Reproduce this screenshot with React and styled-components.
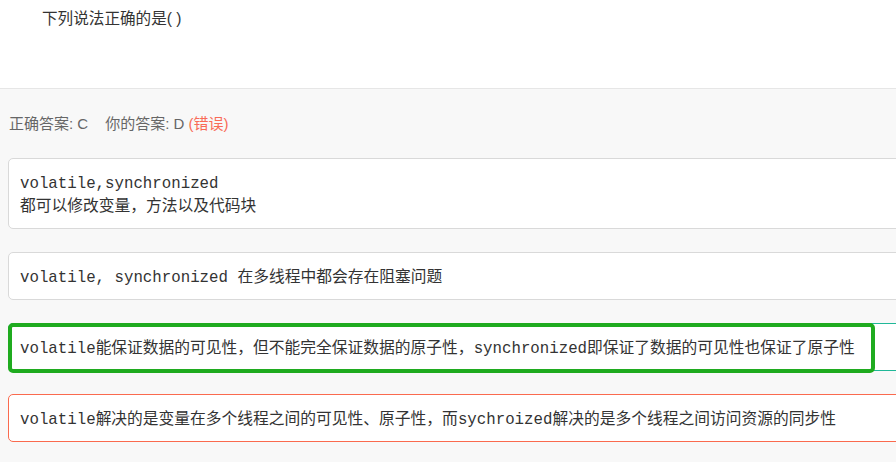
import React from 'react';
import styled, { createGlobalStyle } from 'styled-components';

const GlobalStyle = createGlobalStyle`
  html, body {
    margin: 0;
    padding: 0;
    background: #f8f8f8;
    overflow: hidden;
  }
  body {
    font-family: "Liberation Sans", "Noto Sans CJK SC", sans-serif;
    color: #333;
  }
`;

const Page = styled.div`
  width: 896px;
  height: 462px;
  overflow: hidden;
`;

const QuestionArea = styled.div`
  height: 89px;
  box-sizing: border-box;
  padding: 7px 0 0 42px;
  background: #fff;
  border-bottom: 1px solid #e6e6e6;
  font-size: 15.6px;
  line-height: 24px;
`;

const AnswerArea = styled.div`
  padding: 23px 0 0 8px;
`;

const AnswerLine = styled.div`
  padding-left: 1px;
  font-size: 15px;
  line-height: 24px;
  color: #666;
  margin-bottom: 22px;
`;

const Gap = styled.span`
  display: inline-block;
  width: 17px;
`;

const Wrong = styled.span`
  color: #f96b57;
`;

const OptionList = styled.div`
  display: flex;
  flex-direction: column;
  gap: 23px;
`;

const borderColors = {
  normal: '#d9d9d9',
  correct: '#20b898',
  wrong: '#fa6a4e',
};

const Option = styled.div`
  position: relative;
  width: 1000px;
  box-sizing: border-box;
  padding: 12px 11px 11px;
  background: #fff;
  border: 1px solid ${p => borderColors[p.$state]};
  border-radius: 5px;
  font-size: 15.75px;
  line-height: 23px;
  color: #333;
`;

const Code = styled.span`
  font-family: "Liberation Mono", monospace;
  font-size: 15.75px;
  line-height: 1;
`;

const Highlight = styled.div`
  position: absolute;
  left: -1px;
  top: -1px;
  width: 867px;
  height: 50px;
  box-sizing: border-box;
  border: 4px solid #1fab1f;
  border-radius: 5px;
  pointer-events: none;
`;

const App = () => (
  <>
    <GlobalStyle />
    <Page>
      <QuestionArea>下列说法正确的是( )</QuestionArea>
      <AnswerArea>
        <AnswerLine>
          正确答案: C<Gap />你的答案: D <Wrong>(错误)</Wrong>
        </AnswerLine>
        <OptionList>
          <Option $state="normal">
            <Code>volatile,synchronized</Code>
            <br />
            都可以修改变量，方法以及代码块
          </Option>
          <Option $state="normal">
            <Code>volatile, synchronized </Code>在多线程中都会存在阻塞问题
          </Option>
          <Option $state="correct">
            <Code>volatile</Code>能保证数据的可见性，但不能完全保证数据的原子性，<Code>synchronized</Code>即保证了数据的可见性也保证了原子性
            <Highlight />
          </Option>
          <Option $state="wrong">
            <Code>volatile</Code>解决的是变量在多个线程之间的可见性、原子性，而<Code>sychroized</Code>解决的是多个线程之间访问资源的同步性
          </Option>
        </OptionList>
      </AnswerArea>
    </Page>
  </>
);

export default App;
